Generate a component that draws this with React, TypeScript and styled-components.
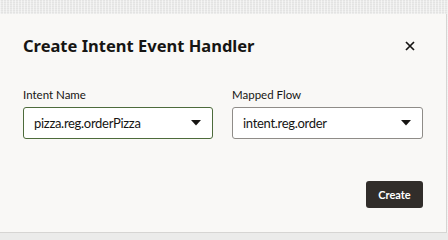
import * as React from "react";
import styled, { createGlobalStyle } from "styled-components";

const Global = createGlobalStyle`
  html, body {
    margin: 0;
    padding: 0;
    width: 448px;
    height: 233px;
    overflow: hidden;
    background: #ebebea;
  }
  * { box-sizing: border-box; }
`;

const Page = styled.div`
  width: 448px;
  height: 233px;
  padding-top: 14px;
  background-color: #ebebea;
  background-image:
    repeating-linear-gradient(90deg, rgba(255,255,255,0.5) 0 1px, transparent 1px 3px),
    repeating-linear-gradient(0deg, rgba(220,220,220,0.5) 0 1px, transparent 1px 2px);
  font-family: Lato, "Noto Sans", sans-serif;
`;

const Dialog = styled.div`
  width: 447px;
  height: 219px;
  background: #f9f8f6;
  border-right: 1px solid #d6d5d3;
  border-bottom: 1px solid #d6d5d3;
  padding: 22px 23px 0 23px;
  display: flex;
  flex-direction: column;
`;

const Header = styled.div`
  height: 20px;
  display: flex;
  align-items: center;
  justify-content: space-between;
`;

const Title = styled.h1`
  margin: 0;
  font-family: "Noto Sans", sans-serif;
  font-size: 16.5px;
  font-weight: 700;
  color: #161513;
  line-height: 20px;
`;

const CloseButton = styled.button`
  border: none;
  background: none;
  padding: 0;
  width: 20px;
  height: 20px;
  margin-right: 3px;
  display: flex;
  align-items: center;
  justify-content: center;
  cursor: pointer;
`;

const Fields = styled.div`
  margin-top: 31px;
  display: grid;
  grid-template-columns: 190px 191px;
  column-gap: 19px;
`;

const Field = styled.div`
  display: flex;
  flex-direction: column;
`;

const Label = styled.label`
  font-size: 11.5px;
  line-height: 16px;
  color: #161513;
  margin-bottom: 4px;
`;

const Select = styled.div<{ $focused?: boolean }>`
  height: 32px;
  background: #ffffff;
  border: 1px solid ${(p) => (p.$focused ? "#4d6b3b" : "#8f8c88")};
  border-radius: 3px;
  display: flex;
  align-items: center;
  justify-content: space-between;
  padding: 0 11px 0 10px;
  font-size: 13px;
  letter-spacing: -0.3px;
  color: #161513;
`;

const Footer = styled.div`
  margin-top: 42px;
  display: flex;
  justify-content: flex-end;
`;

const PrimaryButton = styled.button`
  height: 27px;
  width: 57px;
  border: none;
  border-radius: 3px;
  background: #312d2a;
  color: #ffffff;
  font-family: inherit;
  font-size: 11px;
  font-weight: 700;
  padding: 0;
  cursor: pointer;
`;

const Caret = () => (
  <svg width="10" height="6" viewBox="0 0 10 6">
    <path d="M0 0 H10 L5 5.5 Z" fill="#161513" />
  </svg>
);

export default function App() {
  return (
    <>
      <Global />
      <Page>
        <Dialog>
          <Header>
            <Title>Create Intent Event Handler</Title>
            <CloseButton aria-label="Close">
              <svg width="10" height="10" viewBox="0 0 10 10">
                <path d="M1 1 L9 9 M9 1 L1 9" stroke="#161513" strokeWidth="1.7" />
              </svg>
            </CloseButton>
          </Header>
          <Fields>
            <Field>
              <Label>Intent Name</Label>
              <Select $focused>
                <span>pizza.reg.orderPizza</span>
                <Caret />
              </Select>
            </Field>
            <Field>
              <Label>Mapped Flow</Label>
              <Select>
                <span>intent.reg.order</span>
                <Caret />
              </Select>
            </Field>
          </Fields>
          <Footer>
            <PrimaryButton>Create</PrimaryButton>
          </Footer>
        </Dialog>
      </Page>
    </>
  );
}
